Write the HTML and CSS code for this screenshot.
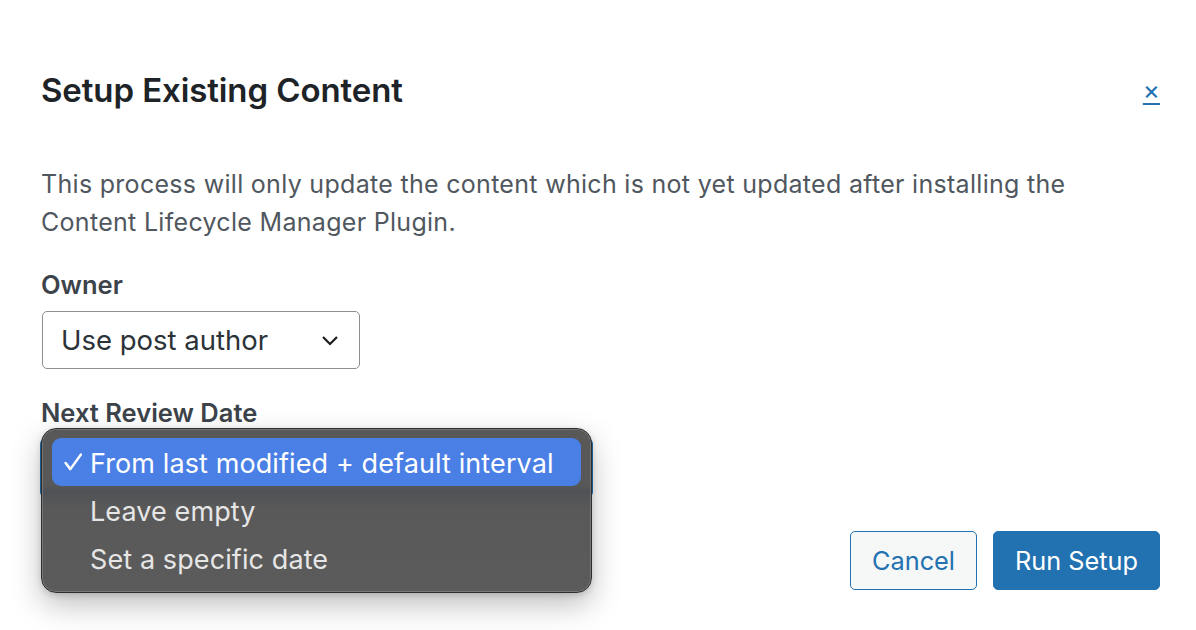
FILE: index.html
```html
<!DOCTYPE html>
<html lang="en">
<head>
<meta charset="utf-8">
<title>Setup Existing Content</title>
<link rel="stylesheet" href="styles.css">
</head>
<body>
<div class="modal">
  <header class="modal-head">
    <h1 class="modal-title">Setup Existing Content</h1>
    <button class="close-btn" type="button" aria-label="Close">×</button>
  </header>
  <p class="intro">This process will only update the content which is not yet updated after installing the Content Lifecycle Manager Plugin.</p>

  <div class="field">
    <div class="field-label">Owner</div>
    <div class="select">
      <span class="select-value">Use post author</span>
      <svg class="chevron" width="22" height="22" viewBox="0 0 22 22" aria-hidden="true"><path d="M4 8l7 7 7-7" fill="none" stroke="#1e1e1e" stroke-width="2.2"/></svg>
    </div>
  </div>

  <div class="field date-field">
    <div class="field-label">Next Review Date</div>
    <div class="select is-focused"></div>
    <div class="menu">
      <div class="menu-item is-active">
        <svg class="check" width="21" height="21" viewBox="0 0 20 20" aria-hidden="true"><path d="M2.5 10.5l4.5 5.8L17 2.5" fill="none" stroke="#fff" stroke-width="2.4" stroke-linecap="round" stroke-linejoin="round"/></svg>
        <span>From last modified + default interval</span>
      </div>
      <div class="menu-item"><span>Leave empty</span></div>
      <div class="menu-item"><span>Set a specific date</span></div>
    </div>
  </div>

  <footer class="actions">
    <button class="btn btn-secondary" type="button">Cancel</button>
    <button class="btn btn-primary" type="button">Run Setup</button>
  </footer>
</div>
</body>
</html>
```

FILE: styles.css
```css
* { box-sizing: border-box; }

html, body {
  margin: 0;
  background: #ffffff;
}

body {
  font-family: Inter, "Noto Sans", "Liberation Sans", sans-serif;
  color: #1d2327;
  min-height: 630px;
}

.modal {
  padding: 73px 36px 0 41px;
}

.modal-head {
  display: flex;
  align-items: center;
  justify-content: space-between;
}

.modal-title {
  margin: 0;
  font-size: 33px;
  line-height: 34px;
  font-weight: 600;
  color: #1d2327;
  letter-spacing: -0.1px;
}

.close-btn {
  border: 0;
  background: none;
  padding: 0;
  font-family: inherit;
  font-size: 26px;
  line-height: 30px;
  color: #2271b1;
  text-decoration: underline;
  text-decoration-thickness: 2px;
  text-underline-offset: 4px;
  cursor: pointer;
}

.intro {
  margin: 58px 0 0;
  max-width: 1100px;
  font-size: 25px;
  line-height: 38px;
  letter-spacing: 0.3px;
  color: #50575e;
}

.field {
  margin-top: 29px;
}

.field-label {
  font-size: 25.5px;
  line-height: 30px;
  font-weight: 600;
  color: #3c434a;
}

.select {
  margin-top: 11px;
  width: 318px;
  height: 58px;
  margin-left: 1px;
  border: 1px solid #8c8f94;
  border-radius: 5px;
  display: flex;
  align-items: center;
  justify-content: space-between;
  padding: 0 18px 0 18px;
  background: #fff;
}

.select-value {
  font-size: 27.5px;
  color: #2c3338;
  white-space: nowrap;
}

.chevron { flex: none; }

.date-field {
  position: relative;
}

.select.is-focused {
  margin-left: 0;
  width: 551px;
  border-color: #2271b1;
  box-shadow: 0 0 0 1px #2271b1;
}

.menu {
  position: absolute;
  left: 0;
  top: 30px;
  width: 551px;
  height: 165px;
  padding: 9px 10px;
  border-radius: 15px;
  background: linear-gradient(#585858 0, #585858 56px, #4f5256 62px, #595959 80px, #5b5b5b 100%);
  border: 1px solid #2e2e2e;
  box-shadow: inset 0 0 0 1px rgba(255,255,255,0.18), 0 12px 30px rgba(0,0,0,0.25), 0 2px 6px rgba(0,0,0,0.15);
  z-index: 2;
}

.menu-item {
  height: 48px;
  display: flex;
  align-items: center;
  padding-left: 38px;
  padding-top: 3px;
  font-size: 27px;
  color: #e6e6e6;
  letter-spacing: 0.1px;
  border-radius: 9px;
  white-space: nowrap;
}

.menu-item.is-active {
  background: #4a80e5;
  color: #ffffff;
  padding-left: 11px;
}

.menu-item .check {
  flex: none;
  margin-right: 6px;
  margin-top: -2px;
}

.actions {
  margin-top: 34px;
  display: flex;
  justify-content: flex-end;
  gap: 16px;
}

.btn {
  height: 59px;
  padding: 0 21px;
  border-radius: 5px;
  font-family: inherit;
  font-size: 25.3px;
  cursor: pointer;
}

.btn-secondary {
  background: #f6f7f7;
  border: 1px solid #2271b1;
  color: #2271b1;
}

.btn-primary {
  background: #2271b1;
  border: 1px solid #2271b1;
  color: #ffffff;
}
```
